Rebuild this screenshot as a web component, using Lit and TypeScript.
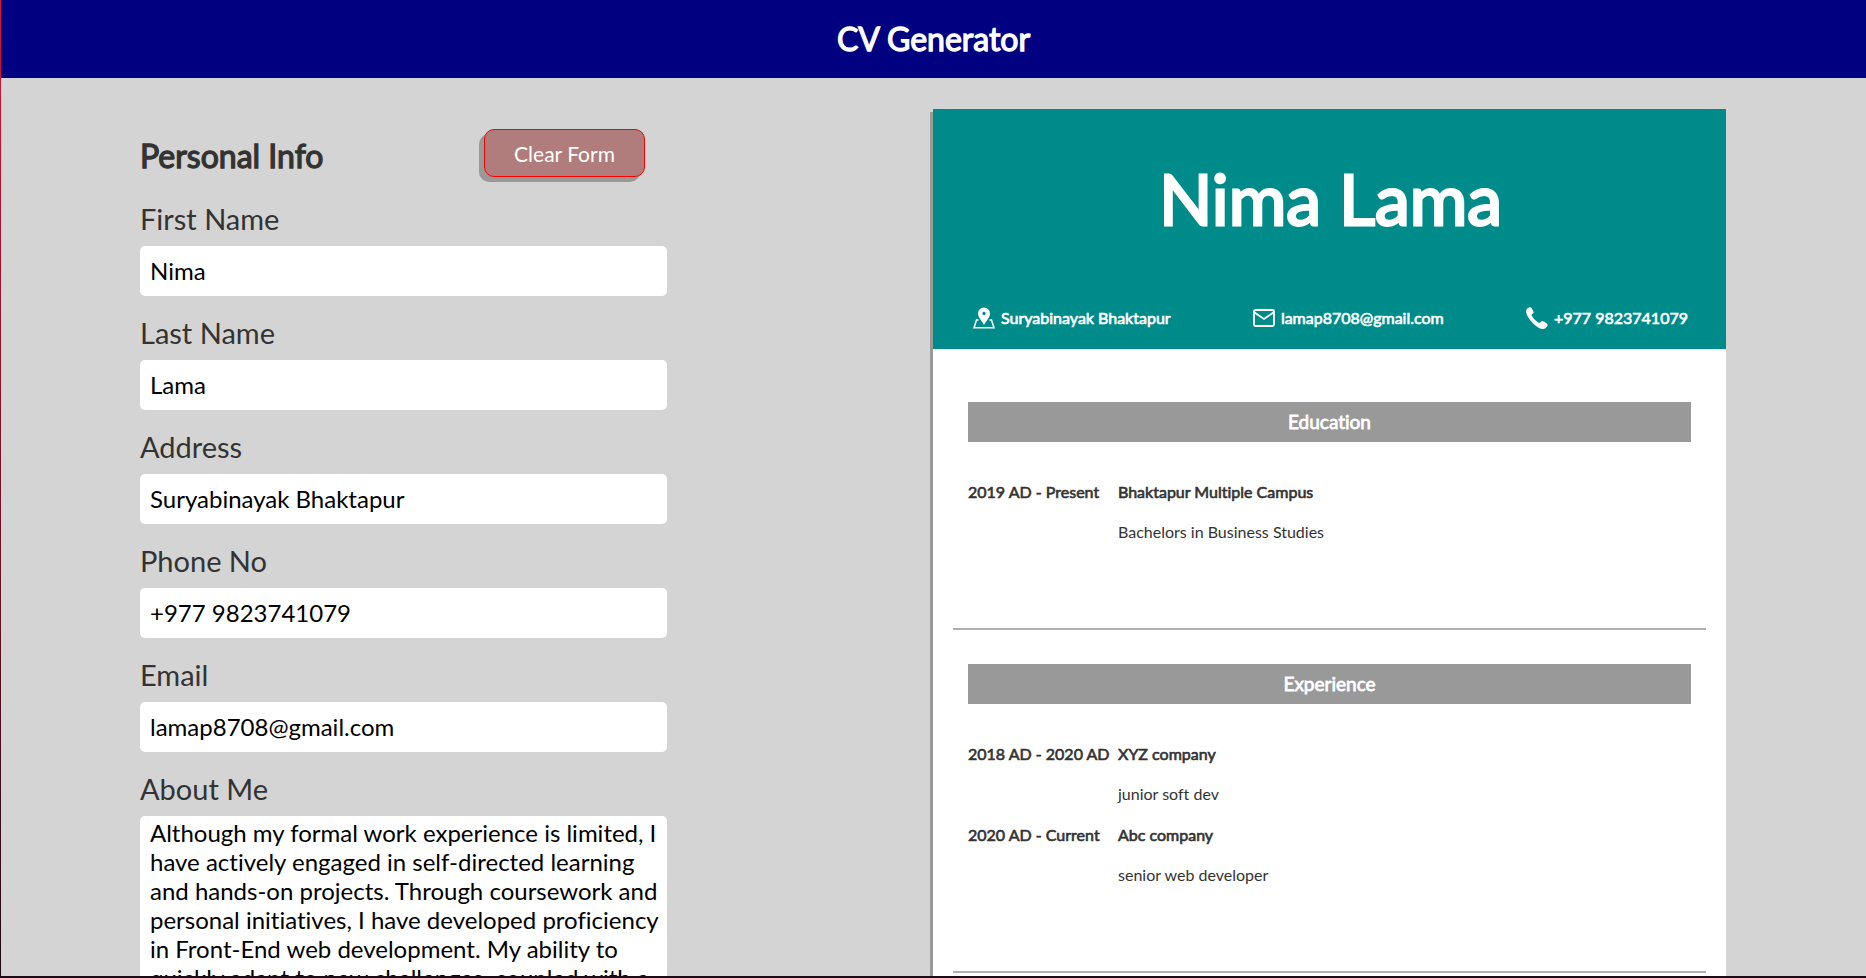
import { LitElement, html, css, svg } from "lit";
import { customElement, state } from "lit/decorators.js";

interface Entry {
  period: string;
  place: string;
  detail: string;
}

const ABOUT =
  "Although my formal work experience is limited, I have actively engaged in self-directed learning and hands-on projects. Through coursework and personal initiatives, I have developed proficiency in Front-End web development. My ability to quickly adapt to new challenges, coupled with a strong work ethic, makes me a good fit for any team.";

const pinIcon = svg`
  <path fill="currentColor" fill-rule="evenodd" d="M11 0.5a6 6 0 0 0-6 6c0 4 4 7.500 6 11.500 2-4 6-7.500 6-11.500a6 6 0 0 0-6-6zm0 4.300a1.700 1.700 0 1 1 0 3.400 1.700 1.700 0 0 1 0-3.400z"/>
  <path fill="none" stroke="currentColor" stroke-width="1.500" d="M5.500 13H3.500L1 20.800h20L18.500 13h-2"/>`;
const mailIcon = svg`
  <rect x="1" y="3" width="20" height="16" rx="1.500" fill="none" stroke="currentColor" stroke-width="1.800"/>
  <path fill="none" stroke="currentColor" stroke-width="1.800" d="M1.500 5.500L11 12l9.500-6.500"/>`;
const phoneIcon = svg`
  <path fill="currentColor" d="M1 1.800C2.200.7 3.700 0 4.600.3c.9.500 3 3.900 3.100 4.900 0 1-2 1.800-2.100 2.900 0 1.700 5.800 7.800 7.600 7.900 1.200 0 2-1.900 3.100-1.900 1.100.1 4.700 2.400 5.200 3.300.5 1-.9 3-2.200 3.900-1.500 1-4 .8-6.300-.4C8.300 18.300 3.200 12.800.9 8 0 5.700-.3 3 1 1.800z"/>`;

@customElement("app-root")
export class AppRoot extends LitElement {
  @state() private firstName = "Nima";
  @state() private lastName = "Lama";
  @state() private address = "Suryabinayak Bhaktapur";
  @state() private phone = "+977 9823741079";
  @state() private email = "lamap8708@gmail.com";
  @state() private about = ABOUT;

  private education: Entry[] = [
    { period: "2019 AD - Present", place: "Bhaktapur Multiple Campus", detail: "Bachelors in Business Studies" },
  ];
  private experience: Entry[] = [
    { period: "2018 AD - 2020 AD", place: "XYZ company", detail: "junior soft dev" },
    { period: "2020 AD - Current", place: "Abc company", detail: "senior web developer" },
  ];

  static styles = css`
    :host {
      display: flex;
      flex-direction: column;
      height: 100vh;
      box-sizing: border-box;
      overflow: hidden;
      border-left: 1px solid;
      border-image: linear-gradient(#dc143c, #1c0a14) 1;
      border-bottom: 2px solid #302e2e;
      background: #d4d4d4;
      color: #333;
      font-family: Lato, "Open Sans", sans-serif;
      font-variant-ligatures: none;
    }
    * { box-sizing: border-box; }
    h1, h2, h3, h4, p { margin: 0; }
    .heavy {
      font-weight: 400;
      -webkit-text-stroke: 0.04em currentColor;
    }
    .top {
      flex: none;
      display: flex;
      align-items: center;
      justify-content: center;
      height: 78px;
      background: #000080;
      color: #fff;
    }
    .title { font-size: 32px; line-height: 40px; }
    .main {
      flex: 1;
      min-height: 0;
      display: grid;
      grid-template-columns: minmax(0, 1fr) minmax(0, 1fr);
      align-items: start;
      padding: 31px 140px 0 139px;
      overflow: hidden;
    }
    .form {
      display: flex;
      flex-direction: column;
      gap: 17px;
      max-width: 527px;
      padding-top: 20px;
    }
    .form-head {
      display: flex;
      justify-content: space-between;
      align-items: flex-start;
      padding-right: 22px;
    }
    .form-title { font-size: 32px; line-height: 53px; }
    .clear {
      width: 161px;
      height: 48px;
      padding: 2px 0 0;
      border: 1px solid #f00;
      border-radius: 10px;
      background: #b07c7c;
      box-shadow: -5px 5px 0 #999;
      color: #fff;
      font: 400 21px/28px Lato, sans-serif;
    }
    .field { display: flex; flex-direction: column; gap: 7px; }
    .label { font-size: 29px; line-height: 40px; }
    .box {
      width: 100%;
      height: 50px;
      padding: 0 10px 2px;
      border: 0;
      border-radius: 5px;
      background: #fff;
      color: #000;
      font: 400 24px/29px Lato, sans-serif;
      font-variant-ligatures: none;
    }
    .area {
      height: 240px;
      padding: 2px 4px 2px 10px;
      resize: none;
      overflow: hidden;
    }
    .sheet {
      background: #fff;
      box-shadow: -3px 3px 0 #999;
      min-height: 1123px;
    }
    .banner {
      display: flex;
      flex-direction: column;
      justify-content: space-between;
      height: 240px;
      padding: 46px 38px 16px 40px;
      background: #008b8b;
      color: #fff;
    }
    .name {
      font-size: 70px;
      line-height: 86px;
      text-align: center;
    }
    .contacts { display: flex; justify-content: space-between; }
    .contact {
      display: flex;
      align-items: center;
      gap: 6px;
      font-size: 16px;
      line-height: 30px;
    }
    .icon { width: 22px; height: 22px; overflow: visible; }
    .section {
      margin: 0 20px;
      padding: 34px 15px 80px;
      border-bottom: 2px solid #b0b0b0;
    }
    .banner + .section { padding-top: 53px; }
    .bar {
      background: #999;
      color: #fff;
      font-size: 19px;
      line-height: 40px;
      text-align: center;
    }
    .entries { padding-top: 25px; }
    .entry {
      display: grid;
      grid-template-columns: 150px minmax(0, 1fr);
      height: 81px;
      line-height: 50px;
    }
    .period, .place { font-size: 16px; }
    .detail { font-size: 16px; line-height: 30px; }
  `;

  private clearForm() {
    this.firstName = this.lastName = this.address = this.phone = this.email = this.about = "";
  }

  private field(id: string, label: string, value: string, type: string, set: (v: string) => void) {
    return html`<div class="field">
      <label class="label" for=${id}>${label}</label>
      <input class="box" id=${id} type=${type} .value=${value}
        @input=${(e: Event) => set((e.target as HTMLInputElement).value)} />
    </div>`;
  }

  private contact(icon: unknown, text: string) {
    return html`<div class="contact heavy">
      <svg class="icon" viewBox="0 0 22 22" aria-hidden="true">${icon}</svg><span>${text}</span>
    </div>`;
  }

  private section(title: string, entries: Entry[]) {
    return html`<section class="section">
      <h3 class="bar heavy">${title}</h3>
      <div class="entries">
        ${entries.map(
          (e) => html`<div class="entry">
            <span class="period heavy">${e.period}</span>
            <div>
              <h4 class="place heavy">${e.place}</h4>
              <p class="detail">${e.detail}</p>
            </div>
          </div>`
        )}
      </div>
    </section>`;
  }

  render() {
    return html`
      <header class="top"><h1 class="title heavy">CV Generator</h1></header>
      <main class="main">
        <form class="form" @submit=${(e: Event) => e.preventDefault()}>
          <div class="form-head">
            <h2 class="form-title heavy">Personal Info</h2>
            <button class="clear" type="button" @click=${this.clearForm}>Clear Form</button>
          </div>
          ${this.field("first", "First Name", this.firstName, "text", (v) => (this.firstName = v))}
          ${this.field("last", "Last Name", this.lastName, "text", (v) => (this.lastName = v))}
          ${this.field("address", "Address", this.address, "text", (v) => (this.address = v))}
          ${this.field("phone", "Phone No", this.phone, "tel", (v) => (this.phone = v))}
          ${this.field("email", "Email", this.email, "email", (v) => (this.email = v))}
          <div class="field">
            <label class="label" for="about">About Me</label>
            <textarea class="box area" id="about" .value=${this.about}
              @input=${(e: Event) => (this.about = (e.target as HTMLTextAreaElement).value)}></textarea>
          </div>
        </form>
        <article class="sheet">
          <div class="banner">
            <h2 class="name heavy">${this.firstName} ${this.lastName}</h2>
            <div class="contacts">
              ${this.contact(pinIcon, this.address)}
              ${this.contact(mailIcon, this.email)}
              ${this.contact(phoneIcon, this.phone)}
            </div>
          </div>
          ${this.section("Education", this.education)}
          ${this.section("Experience", this.experience)}
        </article>
      </main>
    `;
  }
}
